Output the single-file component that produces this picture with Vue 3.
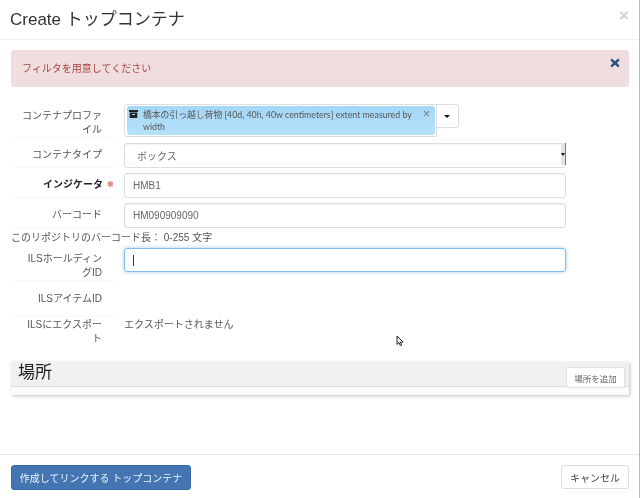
<script setup>
const inputs = [
  { label: 'インジケータ', value: 'HMB1', required: true },
  { label: 'バーコード', value: 'HM090909090' },
]
</script>

<template>
  <div class="modal">
    <header class="head">
      <h1>Create トップコンテナ</h1>
      <span class="close">×</span>
    </header>

    <main class="body">
      <div class="alert">
        <span>フィルタを用意してください</span>
        <svg class="alert-x" viewBox="0 0 10 10" width="10" height="10">
          <path d="M1.8 0.6 5 3.2 8.2 0.6 9.6 2.2 7 5 9.6 7.8 8.2 9.4 5 6.8 1.8 9.4 0.4 7.8 3 5 0.4 2.2Z" fill="#25507f" />
        </svg>
      </div>

      <div class="row profile-row">
        <label class="lab">コンテナプロファイル</label>
        <div class="profile">
          <div class="chip-box">
            <div class="chip">
              <svg class="box-ico" viewBox="0 0 9 8" width="9" height="8">
                <path d="M0 0h9v2H0zM.7 2.6h7.6V8H.7zM3 4v1h3V4z" fill="#222" fill-rule="evenodd" />
              </svg>
              <span class="chip-text">橋本の引っ越し荷物 [40d, 40h, 40w centimeters] extent measured by width</span>
              <span class="chip-x">×</span>
            </div>
          </div>
          <div class="drop"><i class="caret"></i></div>
        </div>
      </div>

      <div class="row type-row">
        <label class="lab">コンテナタイプ</label>
        <div class="field select">
          <span>ボックス</span>
          <span class="sel-arrow"><i class="caret small"></i></span>
        </div>
      </div>

      <div v-for="item in inputs" :key="item.label" class="row input-row">
        <label class="lab" :class="{ strong: item.required }">
          {{ item.label }}<span v-if="item.required" class="req">✱</span>
        </label>
        <div class="field">{{ item.value }}</div>
      </div>

      <p class="help">このリポジトリのバーコード長： 0-255 文字</p>

      <div class="row holding-row">
        <label class="lab">ILSホールディングID</label>
        <div class="field focus"><i class="text-caret"></i></div>
      </div>

      <div class="row item-row">
        <label class="lab">ILSアイテムID</label>
      </div>

      <div class="row export-row">
        <label class="lab">ILSにエクスポート</label>
        <div class="static">エクスポートされません</div>
      </div>

      <section class="panel">
        <div class="panel-head">
          <h2>場所</h2>
          <button class="add" type="button">場所を追加</button>
        </div>
      </section>

      <svg class="pointer" viewBox="0 0 9 12" width="9" height="12">
        <path d="M1 1v8.4l2-1.8 1.3 3 1.4-.6-1.3-2.9h2.7z" fill="#fff" stroke="#222" stroke-width="1" />
      </svg>
    </main>

    <footer class="foot">
      <button class="primary" type="button">作成してリンクする トップコンテナ</button>
      <button class="cancel" type="button">キャンセル</button>
    </footer>
  </div>
</template>

<style>
html, body { margin: 0; background: #fff; }
</style>

<style scoped>
* { box-sizing: border-box; }
.modal {
  position: relative;
  width: 640px;
  height: 498px;
  overflow: hidden;
  background: #fff;
  border-right: 1px solid #bbb;
  font-family: "Liberation Sans", "Noto Sans CJK JP", sans-serif;
  font-size: 10px;
  color: #555;
  display: flex;
  flex-direction: column;
  filter: blur(0.4px);
}
.head {
  height: 40px;
  flex: none;
  border-bottom: 1px solid #eee;
  padding: 0 10px;
  display: flex;
  justify-content: space-between;
  align-items: flex-start;
}
.head h1 {
  margin: 7px 0 0;
  font-size: 17px;
  line-height: 25px;
  font-weight: 400;
  color: #333;
}
.close {
  margin: 6px 0 0;
  font-size: 17px;
  line-height: 20px;
  font-weight: 700;
  color: #d0d0d0;
}
.body {
  position: relative;
  flex: 1;
  padding: 10px 10px 0 11px;
}
.alert {
  position: relative;
  width: 618px;
  height: 37px;
  background: #f0dede;
  border: 1px solid #eedcdc;
  border-radius: 3px;
  padding: 10px 10px 0;
  line-height: 15px;
  font-size: 10px;
  color: #a94442;
}
.alert-x { position: absolute; right: 8px; top: 7px; }
.row {
  display: grid;
  grid-template-columns: 103px 442px;
  column-gap: 10px;
}
.lab {
  padding: 5px 12px 0 10px;
  text-align: right;
  font-size: 10px;
  line-height: 14px;
  color: #555;
  border-bottom: 1px solid #f8f8f8;
}
.lab.strong { font-weight: 700; color: #222; padding-right: 0; padding-left: 0; }
.req { color: #e08a8a; margin-left: 4px; font-size: 8px; vertical-align: 1px; }
.profile-row { margin-top: 17px; height: 33px; }
.profile { display: flex; align-items: flex-start; }
.chip-box {
  width: 313px;
  height: 33px;
  border: 1px solid #ddd;
  border-radius: 3px 0 0 3px;
  padding: 1px 1px 1px 2px;
  flex: none;
}
.chip {
  height: 29px;
  border-radius: 3px;
  background: linear-gradient(#a3d7f7, #b6e1fb);
  display: flex;
  align-items: flex-start;
  padding: 3px 5px 0 2px;
}
.box-ico { flex: none; margin: 1px 5px 0 0; }
.chip-text {
  flex: 1;
  font-family: Lato, "Noto Sans CJK JP", sans-serif;
  font-size: 8.8px;
  line-height: 12px;
  color: #555;
}
.chip-x { font-size: 12px; line-height: 10px; color: #777; margin-left: 2px; }
.drop {
  width: 23px;
  height: 24px;
  margin-left: -1px;
  border: 1px solid #ddd;
  border-left: 0;
  border-radius: 0 3px 3px 0;
  display: flex;
  align-items: center;
  justify-content: center;
}
.caret {
  display: block;
  width: 0;
  height: 0;
  border-left: 3px solid transparent;
  border-right: 3px solid transparent;
  border-top: 3px solid #111;
}
.caret.small { border-left-width: 2px; border-right-width: 2px; }
.field {
  height: 25px;
  border: 1px solid #ddd;
  border-radius: 3px;
  padding: 0 8px;
  display: flex;
  align-items: center;
  font-size: 10px;
  color: #666;
  background: #fff;
  box-shadow: inset 0 1px 1px rgba(0, 0, 0, 0.05);
}
.type-row { margin-top: 6px; }
.select { position: relative; padding-left: 12px; }
.sel-arrow {
  position: absolute;
  right: -1px;
  top: -1px;
  bottom: 2px;
  width: 5px;
  background: #e4e4e4;
  border-right: 1px solid #777;
  display: flex;
  align-items: center;
  justify-content: center;
}
.input-row { margin-top: 5px; }
.input-row + .input-row { margin-top: 5px; }
.help {
  margin: 2px 0 0;
  line-height: 15px;
  font-size: 10px;
  color: #555;
  height: 16px;
}
.holding-row { margin-top: 2px; height: 36px; }
.holding-row .lab { padding-top: 4px; height: 33px; }
.focus {
  height: 24px;
  border-color: #7fbde8;
  box-shadow: 0 0 4px rgba(102, 175, 233, 0.6);
}
.text-caret { display: block; width: 1px; height: 11px; background: #333; }
.item-row { margin-top: 7px; height: 26px; }
.item-row .lab { height: 26px; padding-top: 1px; }
.export-row { height: 36px; }
.export-row .lab { border-bottom: 0; padding-top: 1px; }
.static { font-size: 10px; line-height: 14.5px; padding-top: 1px; }
.panel {
  margin-top: 9px;
  width: 618px;
  height: 33px;
  background: #fbfbfb;
  box-shadow: 1px 1px 3px rgba(0, 0, 0, 0.25);
}
.panel-head {
  height: 25px;
  background: #f0f0f2;
  border-bottom: 1px solid #dcdcdc;
  display: flex;
  justify-content: space-between;
  align-items: flex-start;
  padding: 0 4px 0 7px;
}
.panel-head h2 {
  margin: -1px 0 0;
  font-size: 17px;
  line-height: 24px;
  font-weight: 400;
  color: #222;
}
.add {
  margin-top: 5px;
  width: 59px;
  height: 21px;
  padding: 0;
  background: #fff;
  border: 1px solid #e0e0e0;
  border-radius: 2px;
  font: 8.5px "Liberation Sans", "Noto Sans CJK JP", sans-serif;
  color: #666;
}
.pointer { position: absolute; left: 396px; top: 295px; }
.foot {
  height: 44px;
  flex: none;
  border-top: 1px solid #e8e8e8;
  padding: 10px 10px 0 11px;
  display: flex;
  justify-content: space-between;
  align-items: flex-start;
}
.primary {
  width: 180px;
  height: 25px;
  padding: 0;
  background: #4275b2;
  border: 1px solid #3b6ba6;
  border-radius: 3px;
  font: 10px "Liberation Sans", "Noto Sans CJK JP", sans-serif;
  color: #eef3f9;
}
.cancel {
  width: 68px;
  height: 24px;
  padding: 0;
  background: #fff;
  border: 1px solid #ddd;
  border-radius: 3px;
  font: 10px "Liberation Sans", "Noto Sans CJK JP", sans-serif;
  color: #444;
}
</style>
